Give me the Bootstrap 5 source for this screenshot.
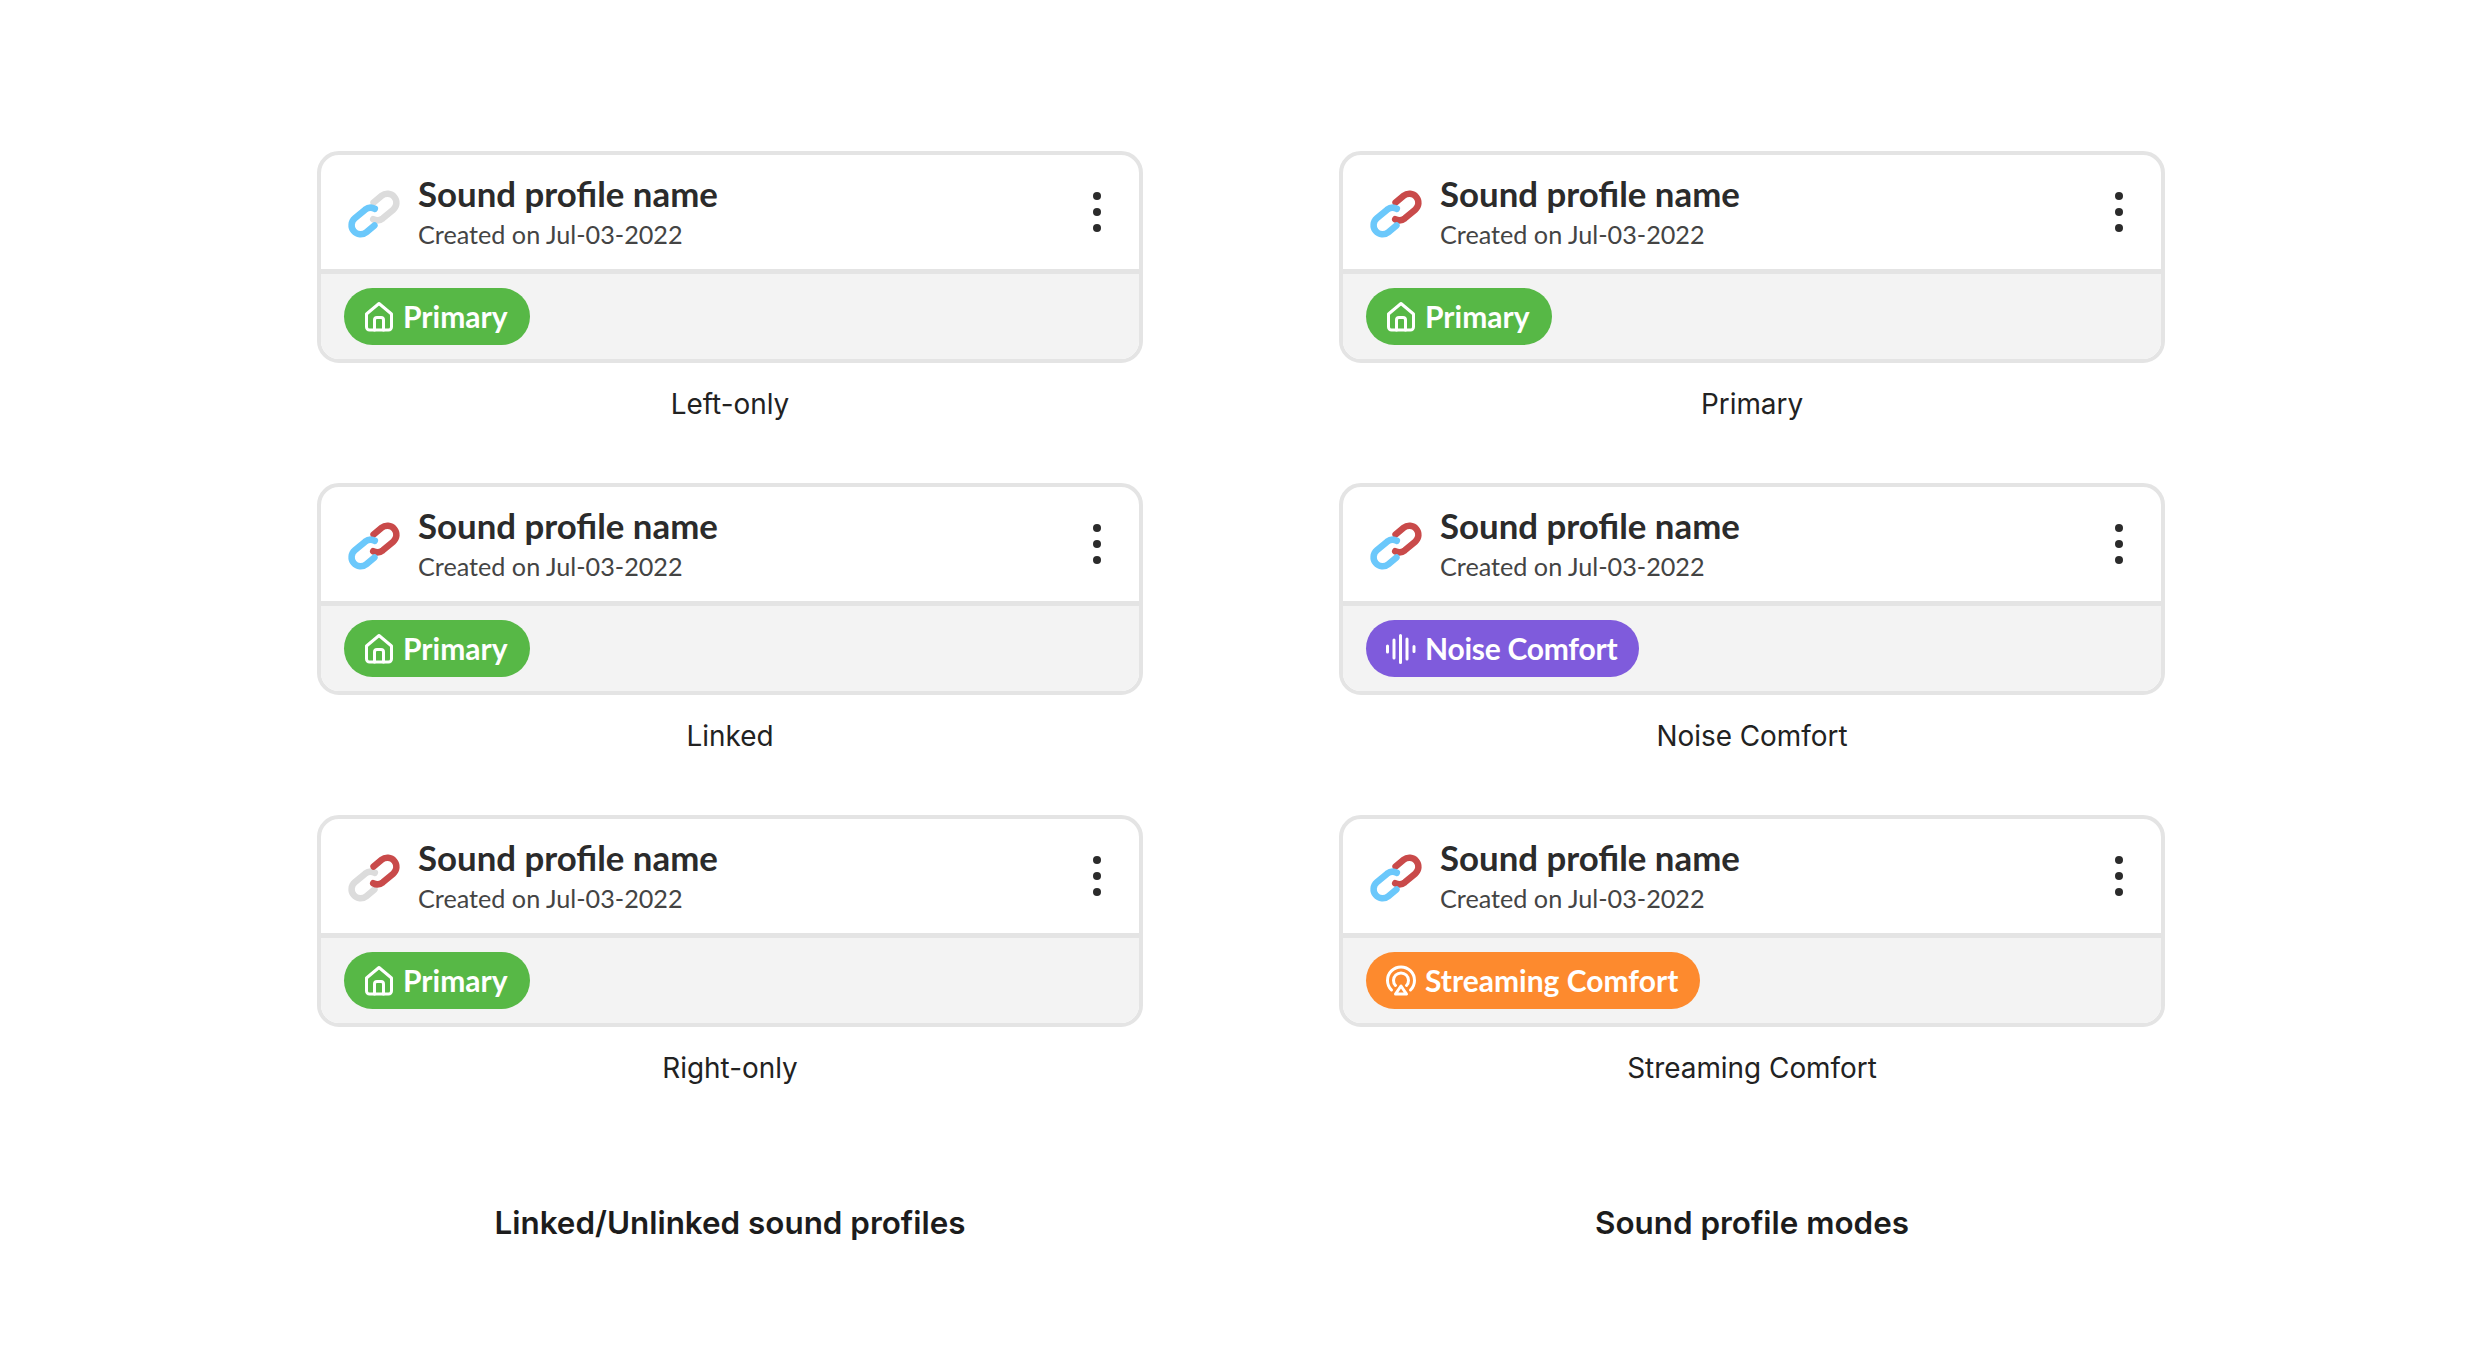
<!DOCTYPE html>
<html lang="en">
<head>
<meta charset="utf-8">
<title>Sound profiles</title>
<link href="https://cdn.jsdelivr.net/npm/bootstrap@5.3.0/dist/css/bootstrap.min.css" rel="stylesheet">
<style>
html,body{background:#fff;margin:0}
.sheet{width:2480px;height:1368px;padding:151px 0 0 2px;gap:196px}
.sheet-col{width:826px}
.variant{height:332px}
.profile-card{height:212px;border:4px solid #e4e4e4;border-radius:22px;overflow:hidden;background:#fff}
.profile-head{height:114px;flex:none;padding:0 38px 0 26px;gap:17px;border-bottom:0}
.profile-foot{flex:1;background:#f3f3f3;border-top:5px solid #e4e4e4;padding:0 0 0 23px;border-radius:0}
.link-ico{width:54px;height:54px;flex:none;overflow:visible;margin-top:3px}
.c-blue,.c-red,.c-grey{fill:none;stroke-width:6.5;stroke-linecap:round}
.c-blue{stroke:#6bc8fb}.c-red{stroke:#c94a4a}.c-grey{stroke:#dcdcdc}
.p-name{font-family:Lato,"Liberation Sans",sans-serif;font-weight:700;font-size:34.8px;line-height:40px;color:#2b2b2b}
.p-date{font-family:Lato,"Liberation Sans",sans-serif;font-weight:400;font-size:25.2px;line-height:32px;color:#444;margin-top:4px}
.dots{width:8px;gap:8px}
.dots i{display:block;width:8px;height:8px;border-radius:50%;background:#2b2b2b}
.mode-pill{height:57px;padding:0 22px 2px 20px;gap:9px;border-radius:29px;color:#fff;font-family:Lato,"Liberation Sans",sans-serif;font-weight:700;font-size:30px;line-height:1}
.mode-pill svg{width:30px;height:30px;flex:none;fill:none;stroke:#fff;stroke-width:3;stroke-linecap:round;stroke-linejoin:round;margin-top:2px;overflow:visible}
.m-green{background:#57b846}.m-purple{background:#7f5bdc;letter-spacing:-.25px}.m-orange{background:#fd8a2e}
.cap{font-family:Inter,"Liberation Sans",sans-serif;font-size:27.9px;line-height:34px;color:#222;margin-top:24px}
.col-title{font-family:Inter,"Liberation Sans",sans-serif;font-weight:600;font-size:31.4px;line-height:40px;color:#1c1c1c;margin-top:56px}
</style>
</head>
<body>
<svg width="0" height="0" class="position-absolute">
<defs>
<symbol id="home" viewBox="0 0 30 30" overflow="visible"><path d="M2.500 12 15 1.500 27.500 12V25a3 3 0 0 1-3 3H5.500a3 3 0 0 1-3-3Z"/><path d="M10.500 28V18a2.500 2.500 0 0 1 2.500-2.500h4a2.500 2.500 0 0 1 2.500 2.500v10"/></symbol>
<symbol id="noise" viewBox="0 0 30 30" overflow="visible"><path d="M1.500 12v6M8 6v18M14.500 1.500v27M21 5v20M28 12.500v5"/></symbol>
<symbol id="stream" viewBox="0 0 30 30" overflow="visible"><path d="M5.500 24A13.500 13.500 0 1 1 24.500 24"/><path d="M9.500 19.500A7.500 7.500 0 1 1 20.500 19.500"/><path d="M15 20 20.500 28H9.500Z"/></symbol>
<symbol id="link-lr" viewBox="0 0 54 54" overflow="visible"><g transform="rotate(-40 27 27)"><path class="c-red" d="M34 18H44.500a9 9 0 0 1 0 18H31a9 9 0 0 1-8-5.500"/><path class="c-blue" d="M20 36H9.500a9 9 0 0 1 0-18H23a9 9 0 0 1 8 5.500"/></g></symbol>
<symbol id="link-l" viewBox="0 0 54 54" overflow="visible"><g transform="rotate(-40 27 27)"><path class="c-grey" d="M34 18H44.500a9 9 0 0 1 0 18H31a9 9 0 0 1-8-5.500"/><path class="c-blue" d="M20 36H9.500a9 9 0 0 1 0-18H23a9 9 0 0 1 8 5.500"/></g></symbol>
<symbol id="link-r" viewBox="0 0 54 54" overflow="visible"><g transform="rotate(-40 27 27)"><path class="c-grey" d="M20 36H9.500a9 9 0 0 1 0-18H23a9 9 0 0 1 8 5.500"/><path class="c-red" d="M34 18H44.500a9 9 0 0 1 0 18H31a9 9 0 0 1-8-5.500"/></g></symbol>
</defs>
</svg>
<main class="sheet d-flex justify-content-center">
<section class="sheet-col">
<div class="variant text-center">
<div class="card profile-card text-start">
<div class="profile-head d-flex align-items-center">
<svg class="link-ico"><use href="#link-l"/></svg>
<div class="flex-grow-1"><div class="p-name">Sound profile name</div><div class="p-date">Created on Jul-03-2022</div></div>
<div class="dots d-flex flex-column"><i></i><i></i><i></i></div>
</div>
<div class="profile-foot d-flex align-items-center"><span class="mode-pill m-green d-inline-flex align-items-center"><svg><use href="#home"/></svg>Primary</span></div>
</div>
<div class="cap">Left-only</div>
</div>
<div class="variant text-center">
<div class="card profile-card text-start">
<div class="profile-head d-flex align-items-center">
<svg class="link-ico"><use href="#link-lr"/></svg>
<div class="flex-grow-1"><div class="p-name">Sound profile name</div><div class="p-date">Created on Jul-03-2022</div></div>
<div class="dots d-flex flex-column"><i></i><i></i><i></i></div>
</div>
<div class="profile-foot d-flex align-items-center"><span class="mode-pill m-green d-inline-flex align-items-center"><svg><use href="#home"/></svg>Primary</span></div>
</div>
<div class="cap">Linked</div>
</div>
<div class="variant text-center">
<div class="card profile-card text-start">
<div class="profile-head d-flex align-items-center">
<svg class="link-ico"><use href="#link-r"/></svg>
<div class="flex-grow-1"><div class="p-name">Sound profile name</div><div class="p-date">Created on Jul-03-2022</div></div>
<div class="dots d-flex flex-column"><i></i><i></i><i></i></div>
</div>
<div class="profile-foot d-flex align-items-center"><span class="mode-pill m-green d-inline-flex align-items-center"><svg><use href="#home"/></svg>Primary</span></div>
</div>
<div class="cap">Right-only</div>
</div>
<div class="col-title text-center">Linked/Unlinked sound profiles</div>
</section>
<section class="sheet-col">
<div class="variant text-center">
<div class="card profile-card text-start">
<div class="profile-head d-flex align-items-center">
<svg class="link-ico"><use href="#link-lr"/></svg>
<div class="flex-grow-1"><div class="p-name">Sound profile name</div><div class="p-date">Created on Jul-03-2022</div></div>
<div class="dots d-flex flex-column"><i></i><i></i><i></i></div>
</div>
<div class="profile-foot d-flex align-items-center"><span class="mode-pill m-green d-inline-flex align-items-center"><svg><use href="#home"/></svg>Primary</span></div>
</div>
<div class="cap">Primary</div>
</div>
<div class="variant text-center">
<div class="card profile-card text-start">
<div class="profile-head d-flex align-items-center">
<svg class="link-ico"><use href="#link-lr"/></svg>
<div class="flex-grow-1"><div class="p-name">Sound profile name</div><div class="p-date">Created on Jul-03-2022</div></div>
<div class="dots d-flex flex-column"><i></i><i></i><i></i></div>
</div>
<div class="profile-foot d-flex align-items-center"><span class="mode-pill m-purple d-inline-flex align-items-center"><svg><use href="#noise"/></svg>Noise Comfort</span></div>
</div>
<div class="cap">Noise Comfort</div>
</div>
<div class="variant text-center">
<div class="card profile-card text-start">
<div class="profile-head d-flex align-items-center">
<svg class="link-ico"><use href="#link-lr"/></svg>
<div class="flex-grow-1"><div class="p-name">Sound profile name</div><div class="p-date">Created on Jul-03-2022</div></div>
<div class="dots d-flex flex-column"><i></i><i></i><i></i></div>
</div>
<div class="profile-foot d-flex align-items-center"><span class="mode-pill m-orange d-inline-flex align-items-center"><svg><use href="#stream"/></svg>Streaming Comfort</span></div>
</div>
<div class="cap">Streaming Comfort</div>
</div>
<div class="col-title text-center">Sound profile modes</div>
</section>
</main>
<script src="https://cdn.jsdelivr.net/npm/bootstrap@5.3.0/dist/js/bootstrap.bundle.min.js"></script>
</body>
</html>
